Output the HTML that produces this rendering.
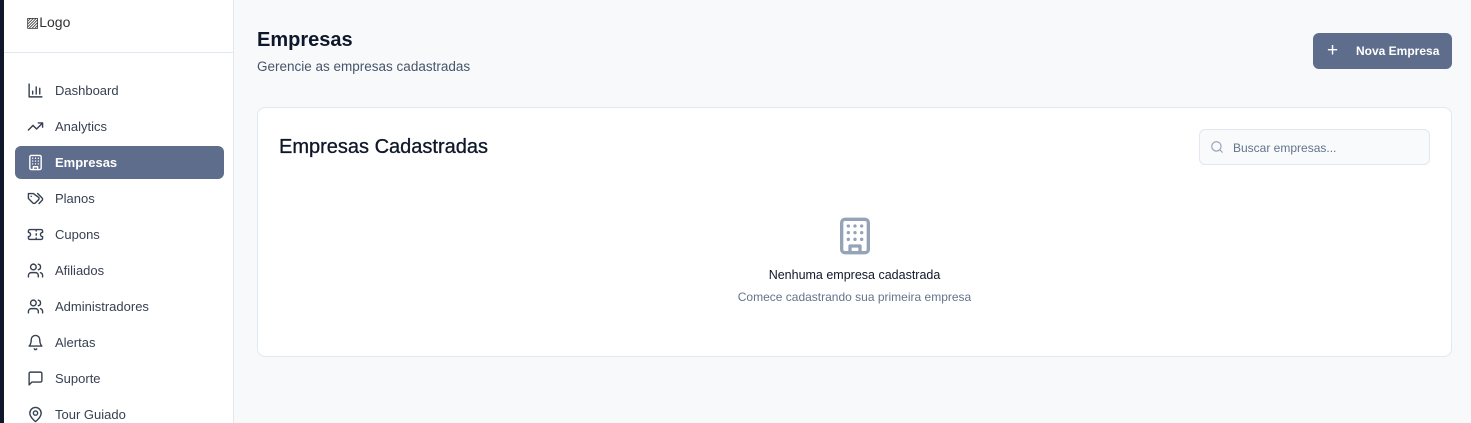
<!DOCTYPE html>
<html><head><meta charset="utf-8"><style>
*{box-sizing:border-box;margin:0;padding:0}
html,body{width:1471px;height:423px;overflow:hidden}
body{background:#f8f9fb;font-family:"Liberation Sans",sans-serif;position:relative}
.strip{position:absolute;left:0;top:0;width:4px;height:423px;background:#0f172a}
.side{position:absolute;left:4px;top:0;width:230px;height:423px;background:#fff;border-right:1px solid #e5e7eb}
.logo{position:absolute;left:22px;top:14px;font-size:14px;color:#333}
.hr{position:absolute;left:0;top:52px;width:230px;border-top:1px solid #e2e8f0}
.item{position:absolute;left:11px;width:209px;height:33px;border-radius:6px;display:flex;align-items:center;font-size:13px;color:#374151}
.item svg{position:absolute;left:12px;width:17px;height:17px;fill:none;stroke:#374151;stroke-width:2;stroke-linecap:round;stroke-linejoin:round}
.item span{position:absolute;left:40px}
.item.act{background:#5f6d8c;color:#fff;font-weight:bold}
.item.act svg{stroke:#fff}
h1{position:absolute;left:257px;top:29px;font-size:20px;font-weight:bold;color:#0f172a}
.sub{position:absolute;left:257px;top:59px;font-size:13.5px;color:#475569}
.btn{position:absolute;left:1313px;top:33px;width:139px;height:36px;background:#5f6d8c;border-radius:6px;color:#fff;font-size:12px;font-weight:bold}
.btn .p{position:absolute;left:14px;top:8px;font-size:19px;line-height:19px;font-weight:normal}
.btn .t{position:absolute;left:43px;top:11px}
.card{position:absolute;left:257px;top:107px;width:1195px;height:250px;background:#fff;border:1px solid #e2e8f0;border-radius:8px}
.ct{position:absolute;left:21px;top:28px;font-size:20px;color:#0f172a;-webkit-text-stroke:0.3px #0f172a}
.search{position:absolute;left:941px;top:21px;width:231px;height:36px;border:1px solid #e2e8f0;border-radius:6px;background:#f8fafc;font-size:12px;color:#64748b}
.search span{position:absolute;left:33px;top:11px}
.em{position:absolute;left:0;width:100%;text-align:center}
</style></head><body>
<div class="strip"></div>
<div class="side">
<div class="logo">▨Logo</div>
<div class="hr"></div>
<div class="item" style="top:74px"><svg viewBox="0 0 24 24"><path d="M3 3v18h18M8 17v-4M13 17V7M18 17v-8"/></svg><span>Dashboard</span></div>
<div class="item" style="top:110px"><svg viewBox="0 0 24 24"><path d="M22 7l-8.5 8.5-5-5L2 17M16 7h6v6"/></svg><span>Analytics</span></div>
<div class="item act" style="top:146px"><svg viewBox="0 0 24 24"><rect x="4" y="2" width="16" height="20" rx="2"/><path d="M9 22v-4h6v4M8 6h.01M12 6h.01M16 6h.01M8 10h.01M12 10h.01M16 10h.01M8 14h.01M12 14h.01M16 14h.01"/></svg><span>Empresas</span></div>
<div class="item" style="top:182px"><svg viewBox="0 0 24 24"><path d="M9 5H2v7l6.3 6.3a2.4 2.4 0 003.4 0l4.6-4.6a2.4 2.4 0 000-3.4L9 5zM6 9h.01M15 5l6.3 6.3a2.4 2.4 0 010 3.4L17 19"/></svg><span>Planos</span></div>
<div class="item" style="top:218px"><svg viewBox="0 0 24 24"><path d="M2 9a3 3 0 010 6v2a2 2 0 002 2h16a2 2 0 002-2v-2a3 3 0 010-6V7a2 2 0 00-2-2H4a2 2 0 00-2 2zM13 5v2M13 17v2M13 11v2"/></svg><span>Cupons</span></div>
<div class="item" style="top:254px"><svg viewBox="0 0 24 24"><path d="M16 21v-2a4 4 0 00-4-4H6a4 4 0 00-4 4v2"/><circle cx="9" cy="7" r="4"/><path d="M22 21v-2a4 4 0 00-3-3.9M16 3.1a4 4 0 010 7.8"/></svg><span>Afiliados</span></div>
<div class="item" style="top:290px"><svg viewBox="0 0 24 24"><path d="M16 21v-2a4 4 0 00-4-4H6a4 4 0 00-4 4v2"/><circle cx="9" cy="7" r="4"/><path d="M22 21v-2a4 4 0 00-3-3.9M16 3.1a4 4 0 010 7.8"/></svg><span>Administradores</span></div>
<div class="item" style="top:326px"><svg viewBox="0 0 24 24"><path d="M6 8a6 6 0 0112 0c0 7 3 9 3 9H3s3-2 3-9M10.3 21a1.9 1.9 0 003.4 0"/></svg><span>Alertas</span></div>
<div class="item" style="top:362px"><svg viewBox="0 0 24 24"><path d="M21 15a2 2 0 01-2 2H7l-4 4V5a2 2 0 012-2h14a2 2 0 012 2z"/></svg><span>Suporte</span></div>
<div class="item" style="top:398px"><svg viewBox="0 0 24 24"><path d="M20 10c0 6-8 12-8 12s-8-6-8-12a8 8 0 0116 0z"/><circle cx="12" cy="10" r="3"/></svg><span>Tour Guiado</span></div>
</div>
<h1>Empresas</h1>
<div class="sub">Gerencie as empresas cadastradas</div>
<div class="btn"><span class="p">+</span><span class="t">Nova Empresa</span></div>
<div class="card">
<div class="ct">Empresas Cadastradas</div>
<div class="search"><svg style="position:absolute;left:10px;top:10px" width="14" height="14" viewBox="0 0 24 24" fill="none" stroke="#94a3b8" stroke-width="2" stroke-linecap="round"><circle cx="11" cy="11" r="8"/><path d="M21 21l-4.3-4.3"/></svg><span>Buscar empresas...</span></div>
<svg style="position:absolute;left:577px;top:108px" width="40" height="40" viewBox="0 0 24 24" fill="none" stroke="#94a3b8" stroke-width="2" stroke-linecap="round" stroke-linejoin="round"><rect x="4" y="2" width="16" height="20" rx="2"/><path d="M9 22v-4h6v4M8 6h.01M12 6h.01M16 6h.01M8 10h.01M12 10h.01M16 10h.01M8 14h.01M12 14h.01M16 14h.01"/></svg>
<div class="em" style="top:160px;font-size:12.5px;color:#0f172a">Nenhuma empresa cadastrada</div>
<div class="em" style="top:182px;font-size:12px;color:#64748b">Comece cadastrando sua primeira empresa</div>
</div>
</body></html>
